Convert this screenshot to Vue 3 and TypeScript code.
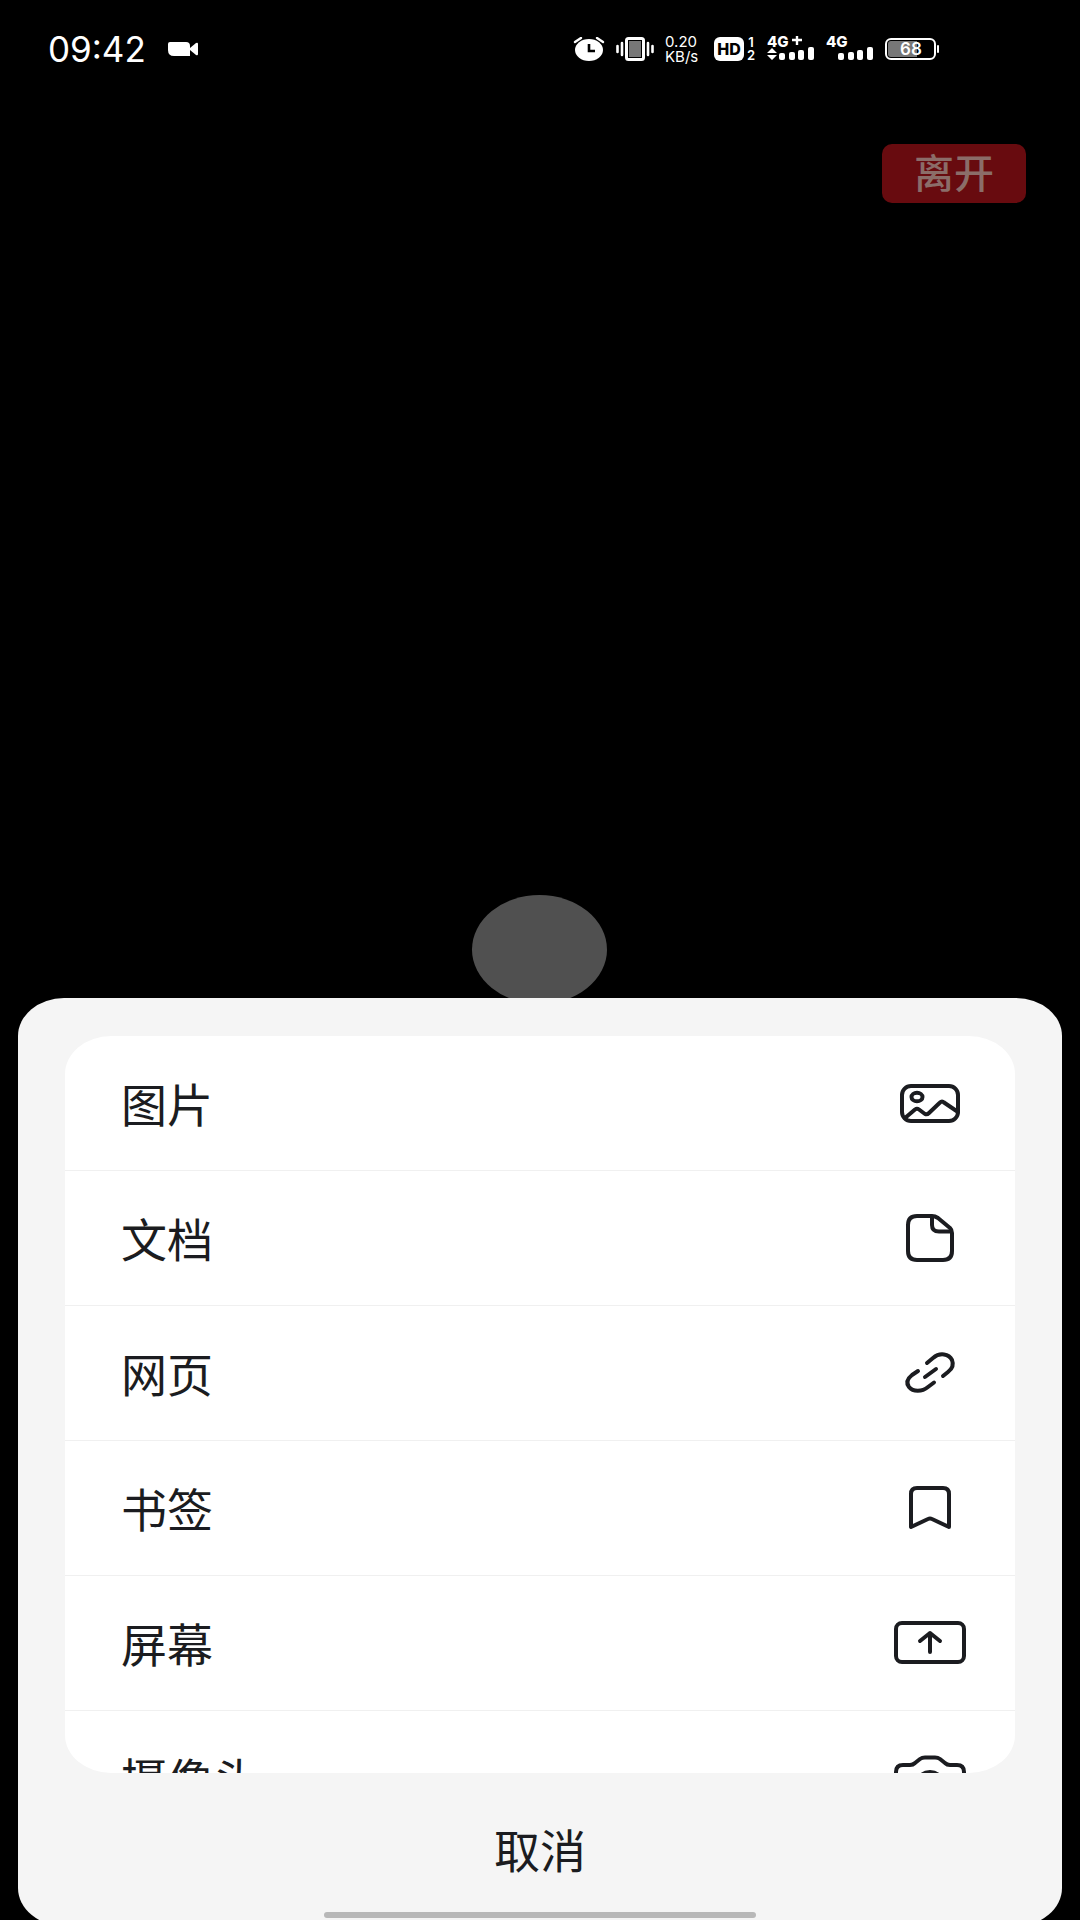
<script setup lang="ts">
interface Item {
  id: string
  label: string
}

const items: Item[] = [
  { id: 'image', label: '图片' },
  { id: 'document', label: '文档' },
  { id: 'web', label: '网页' },
  { id: 'bookmark', label: '书签' },
  { id: 'screen', label: '屏幕' },
  { id: 'camera', label: '摄像头' },
]
</script>

<template>
  <div class="page">
    <header class="status">
      <div class="group left">
        <time class="clock">09:42</time>
        <svg class="video" width="30" height="14" viewBox="0 0 30 14" fill="#fff">
          <path d="M2 0H18Q22 0 22 4V14H6Q0 14 0 8V2Q0 0 2 0Z" />
          <path d="M22 6L28 1Q30 0 30 2V12Q30 14 28 13L22 8Z" />
        </svg>
      </div>
      <div class="group right">
        <svg width="32" height="24" viewBox="0 0 32 24">
          <ellipse cx="16" cy="13" rx="14" ry="11" fill="#fff" />
          <path d="M2 5L8 1M30 5L24 1" stroke="#fff" stroke-width="2.4" stroke-linecap="round" />
          <path d="M16 7V14H22" fill="none" stroke="#000" stroke-width="2.6" />
        </svg>
        <svg width="38" height="24" viewBox="0 0 38 24">
          <rect x="10.5" y="1.5" width="17" height="21" rx="2" fill="#777" stroke="#fff" stroke-width="3" />
          <rect x="12.5" y="3.5" width="13" height="17" fill="#777" stroke="#000" stroke-width="1" />
          <path d="M6 6V18M1.5 9V15M32 6V18M36.5 9V15" stroke="#fff" stroke-width="2.6" stroke-linecap="round" />
        </svg>
        <div class="speed"><span>0.20</span><span>KB/s</span></div>
        <div class="hd">
          <span class="badge">HD</span>
          <span class="sims"><span>1</span><span>2</span></span>
        </div>
        <svg class="signal" width="48" height="26" viewBox="0 0 48 26" fill="#fff">
          <text x="0" y="11">4G</text>
          <path d="M25 4H35M30 0V9" stroke="#fff" stroke-width="2.4" />
          <path d="M0 17L5 12L10 17ZM0 19L5 24L10 19Z" />
          <rect x="12" y="17" width="6" height="7" rx="2" />
          <rect x="22" y="16" width="6" height="8" rx="2" />
          <rect x="31" y="14" width="6" height="10" rx="2" />
          <rect x="41" y="11" width="6" height="13" rx="2" />
        </svg>
        <svg class="signal" width="48" height="26" viewBox="0 0 48 26" fill="#fff">
          <text x="0" y="11">4G</text>
          <rect x="12" y="17" width="6" height="7" rx="2" />
          <rect x="22" y="16" width="6" height="8" rx="2" />
          <rect x="31" y="14" width="6" height="10" rx="2" />
          <rect x="41" y="11" width="6" height="13" rx="2" />
        </svg>
        <svg class="battery" width="54" height="22" viewBox="0 0 54 22">
          <rect x="1" y="1" width="49" height="20" rx="5" fill="#000" stroke="#fff" stroke-width="2" />
          <path d="M6 3H32V19H6Q3 19 3 16V6Q3 3 6 3Z" fill="#777" />
          <rect x="52" y="7" width="2" height="8" rx="1" fill="#fff" />
          <text x="26" y="17" text-anchor="middle" fill="#fff">68</text>
        </svg>
      </div>
    </header>

    <main class="stage">
      <button class="leave" type="button">离开</button>
      <div class="avatar"></div>
    </main>

    <section class="sheet">
      <ul class="list">
        <li v-for="item in items" :key="item.id">
          <button class="row" type="button">
            <span class="label">{{ item.label }}</span>
            <svg class="icon" width="72" height="60" viewBox="0 0 72 60">
              <g v-if="item.id === 'image'">
                <rect x="8" y="13" width="56" height="35" rx="9" />
                <ellipse cx="23" cy="24" rx="5.5" ry="4.3" />
                <path d="M11 45L21 36.5Q23 35 25 36.5L31 41Q33 42 35 40L46 29.5Q48 27.5 50 29.5L64 39" />
              </g>
              <g v-else-if="item.id === 'document'">
                <path d="M38 8H23Q14 8 14 17V43Q14 52 23 52H49Q58 52 58 43V25Q58 22 56 20L44 10Q41 8 38 8Z" />
                <path d="M38 9V17Q38 23.5 45 23.5H57" />
              </g>
              <g v-else-if="item.id === 'web'">
                <path d="M33 20L39 15C46 9 55 11 58 17C60 22 58 26 54 29L49 33" />
                <path d="M24 28L18 32C13 36 12 40 15 44C19 49 28 49 34 44L40 39.5" />
                <path d="M31 34L42 26" />
              </g>
              <g v-else-if="item.id === 'bookmark'">
                <path d="M17 49V16Q17 10 23 10H49Q55 10 55 16V49L38 41Q36 40 34 41Z" />
              </g>
              <g v-else-if="item.id === 'screen'">
                <rect x="2" y="10" width="68" height="39" rx="6" />
                <path d="M36 39V20M26 28L36 20L46 28" />
              </g>
              <g v-else>
                <path d="M2 46V24Q2 17 9 17H16Q19 17 21 15L26 11Q28 9.5 31 9.5H41Q44 9.5 46 11L51 15Q53 17 56 17H63Q70 17 70 24V46Q70 52 63 52H9Q2 52 2 46Z" />
                <ellipse cx="36" cy="34" rx="12" ry="10" />
              </g>
            </svg>
          </button>
        </li>
      </ul>
      <button class="cancel" type="button">取消</button>
      <div class="home"></div>
    </section>
  </div>
</template>

<style>
body {
  background: #000;
}
</style>

<style scoped>
.page {
  display: flex;
  flex-direction: column;
  height: 100vh;
  overflow: hidden;
  background: #000;
  font-family: Inter, "Noto Sans CJK SC", sans-serif;
}

button {
  border: 0;
  margin: 0;
  padding: 0;
  background: none;
  font-family: inherit;
  cursor: pointer;
}

.status {
  display: flex;
  flex: none;
  justify-content: space-between;
  align-items: center;
  height: 98px;
  padding: 0 141px 0 48px;
  color: #fff;
}

.group {
  display: flex;
  align-items: center;
}

.left {
  gap: 22px;
}

.clock {
  font-size: 35px;
  line-height: 40px;
}

.right {
  gap: 11px;
}

.speed {
  display: flex;
  flex-direction: column;
  width: 38px;
  font-size: 15px;
  line-height: 15px;
}

.hd {
  display: flex;
  align-items: center;
  gap: 2px;
}

.badge {
  width: 30px;
  height: 24px;
  border-radius: 6px;
  background: #fff;
  color: #000;
  font-size: 16px;
  font-weight: 800;
  line-height: 24px;
  text-align: center;
}

.sims {
  display: flex;
  flex-direction: column;
  width: 10px;
  font-size: 13px;
  font-weight: 600;
  line-height: 13px;
  text-align: center;
}

.signal {
  overflow: visible;
}

.signal text {
  font-size: 15px;
  font-weight: 800;
}

.battery text {
  font-size: 17px;
  font-weight: 600;
}

.stage {
  display: flex;
  flex: 1;
  flex-direction: column;
  justify-content: space-between;
  align-items: center;
  min-height: 0;
  padding-top: 46px;
}

.leave {
  align-self: flex-end;
  width: 144px;
  height: 59px;
  margin-right: 54px;
  border-radius: 10px;
  background: #680b0f;
  color: #8b6d69;
  font-size: 40px;
  font-weight: 500;
  line-height: 59px;
}

.avatar {
  width: 135px;
  height: 109px;
  margin: 0 2px -6px 0;
  border-radius: 50%;
  background: #505050;
}

.sheet {
  position: relative;
  display: flex;
  flex: none;
  flex-direction: column;
  align-items: stretch;
  margin: 0 18px -6px;
  padding: 38px 47px 8px;
  border-radius: 46px / 38px;
  background: #f5f5f5;
  color: #1b1c20;
}

.list {
  max-height: 737px;
  margin: 0 0 18px;
  padding: 0;
  overflow: hidden;
  border-radius: 46px / 38px;
  background: #fff;
  list-style: none;
}

.row {
  display: flex;
  box-sizing: border-box;
  justify-content: space-between;
  align-items: center;
  width: 100%;
  height: 135px;
  padding: 0 49px 0 56px;
  border-bottom: 1px solid #f0f0f0;
  color: inherit;
  font-size: 46px;
  line-height: 56px;
}

.label {
  padding-top: 3px;
}

.icon {
  fill: none;
  stroke: #1b1c20;
  stroke-width: 4;
  stroke-linecap: round;
  stroke-linejoin: round;
}

.cancel {
  height: 120px;
  color: inherit;
  font-size: 46px;
  line-height: 56px;
}

.home {
  align-self: center;
  width: 432px;
  height: 6px;
  margin-top: 1px;
  border-radius: 3px;
  background: #b8b8b8;
}
</style>
